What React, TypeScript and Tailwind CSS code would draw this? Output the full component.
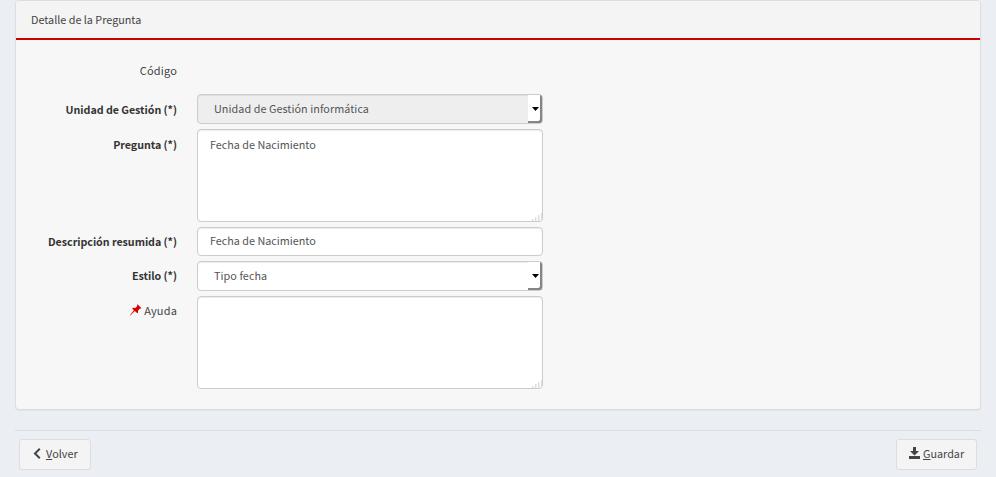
import React from "react";

function Caret() {
  return (
    <span className="flex h-[28px] w-[14px] items-center justify-center rounded-r-[2px] bg-white shadow-[inset_-2px_-2px_0_#858585]">
      <svg width="7" height="4" viewBox="0 0 7 4" className="mb-px block">
        <path d="M0 0H7L3.5 4Z" fill="#000" />
      </svg>
    </span>
  );
}

function Grip() {
  return (
    <svg width="10" height="9" viewBox="0 0 10 9" className="absolute bottom-0 right-0" shapeRendering="crispEdges">
      <path d="M0 7h1v2H0zM3 5h1v4H3zM6 3h1v6H6zM9 1h1v8H9z" fill="#dcdcdc" />
      <path d="M1 7h1v2H1zM4 5h1v4H4zM7 3h1v6H7z" fill="#efefef" />
    </svg>
  );
}

function Label({ children, strong = false, raised = false }: { children: React.ReactNode; strong?: boolean; raised?: boolean }) {
  return (
    <div
      className={
        (strong
          ? "flex w-[161px] shrink-0 justify-end whitespace-nowrap text-[10.7px] font-bold leading-[17px] tracking-[-0.04px] text-[#333] "
          : "flex w-[161px] shrink-0 justify-end whitespace-nowrap text-[11px] leading-[17px] tracking-[0.16px] text-[#444] ") +
        (raised ? "pt-[6px]" : "pt-[7px]")
      }
    >
      {children}
    </div>
  );
}

function Select({ value, disabled = false }: { value: string; disabled?: boolean }) {
  return (
    <div
      className={
        disabled
          ? "flex h-[30px] w-[346px] justify-between rounded-[4px] border border-[#ccc] bg-[#eee] pl-4 shadow-[inset_0_1px_1px_rgba(0,0,0,0.075)]"
          : "flex h-[30px] w-[346px] justify-between rounded-[4px] border border-[#ccc] bg-white pl-4 shadow-[inset_0_1px_1px_rgba(0,0,0,0.075)]"
      }
    >
      <span className="pt-[5px] leading-[17px] tracking-[0.06px]">{value}</span>
      <Caret />
    </div>
  );
}

function TextArea({ value }: { value: string }) {
  return (
    <div className="relative h-[93px] w-[346px] rounded-[4px] border border-[#ccc] bg-white px-3 pt-[6px] leading-[17px] shadow-[inset_0_1px_1px_rgba(0,0,0,0.075)]">
      {value}
      <Grip />
    </div>
  );
}

export default function App() {
  return (
    <div className="h-[477px] w-[996px] overflow-hidden bg-[#ebeef3] px-[15px] font-['Noto_Sans_CJK_SC','Open_Sans',sans-serif] text-[10.8px] text-[#555]">
      <section className="h-[410px] rounded-[4px] border border-[#ddd] bg-[#f7f7f7] shadow-[0_1px_1px_rgba(0,0,0,0.05)]">
        <header className="h-[39px] rounded-t-[3px] border-b-2 border-[#c00] bg-[#f4f4f4] pl-[15px] pt-[10px] leading-[17px] text-[#444]">
          Detalle de la Pregunta
        </header>
        <div className="flex flex-col gap-[5px] pt-[15px]">
          <div className="flex h-[34px]">
            <Label>Código</Label>
          </div>
          <div className="flex gap-5">
            <Label strong>Unidad de Gestión (*)</Label>
            <Select value="Unidad de Gestión informática" disabled />
          </div>
          <div className="flex gap-5">
            <Label strong>Pregunta (*)</Label>
            <TextArea value="Fecha de Nacimiento" />
          </div>
          <div className="flex gap-5">
            <Label strong raised>Descripción resumida (*)</Label>
            <div className="h-[29px] w-[346px] rounded-[4px] border border-[#ccc] bg-white px-3 pt-[4px] leading-[17px] shadow-[inset_0_1px_1px_rgba(0,0,0,0.075)]">
              Fecha de Nacimiento
            </div>
          </div>
          <div className="flex gap-5">
            <Label strong raised>Estilo (*)</Label>
            <Select value="Tipo fecha" />
          </div>
          <div className="flex gap-5">
            <Label raised>
              <svg width="12" height="12" viewBox="0 0 12 12" className="mr-[2px] mt-[2px]">
                <path d="M7.5 0.3 11.5 4.2 10.4 4.8 9.9 4.6 8 6.7 8 8.7 7.3 9.3 4.9 7.1 0.3 11.5 0 11.2 3.9 6.2 2.2 4.5 2.9 3.8 5.3 3.9 7.3 2 7 1.2Z" fill="#d40000" />
              </svg>
              Ayuda
            </Label>
            <TextArea value="" />
          </div>
        </div>
      </section>
      <footer className="mt-[20px] flex justify-between border-t border-[#ddd] px-1 pt-2">
        <button className="flex h-[31px] w-[72px] rounded-[3px] border border-[#ddd] bg-[#f4f4f4] pl-[13px] pt-[5px] leading-[17px] text-[#444]">
          <svg width="8" height="11" viewBox="0 0 8 11" className="mr-[5px] mt-[3px]">
            <path d="M6.8 0.8 2 5.5 6.8 10.2" fill="none" stroke="#444" strokeWidth="2" />
          </svg>
          <span className="underline underline-offset-1">V</span>olver
        </button>
        <button className="flex h-[31px] w-[81px] rounded-[3px] border border-[#ddd] bg-[#f4f4f4] pl-[12px] pt-[5px] leading-[17px] text-[#444]">
          <svg width="11" height="12" viewBox="0 0 11 12" className="mr-[3px] mt-[2px]">
            <path d="M4 0h3v4h3L5.5 8.5 1 4h3zM0 9h11v3H0z" fill="#444" />
          </svg>
          <span className="underline underline-offset-1">G</span>uardar
        </button>
      </footer>
    </div>
  );
}
